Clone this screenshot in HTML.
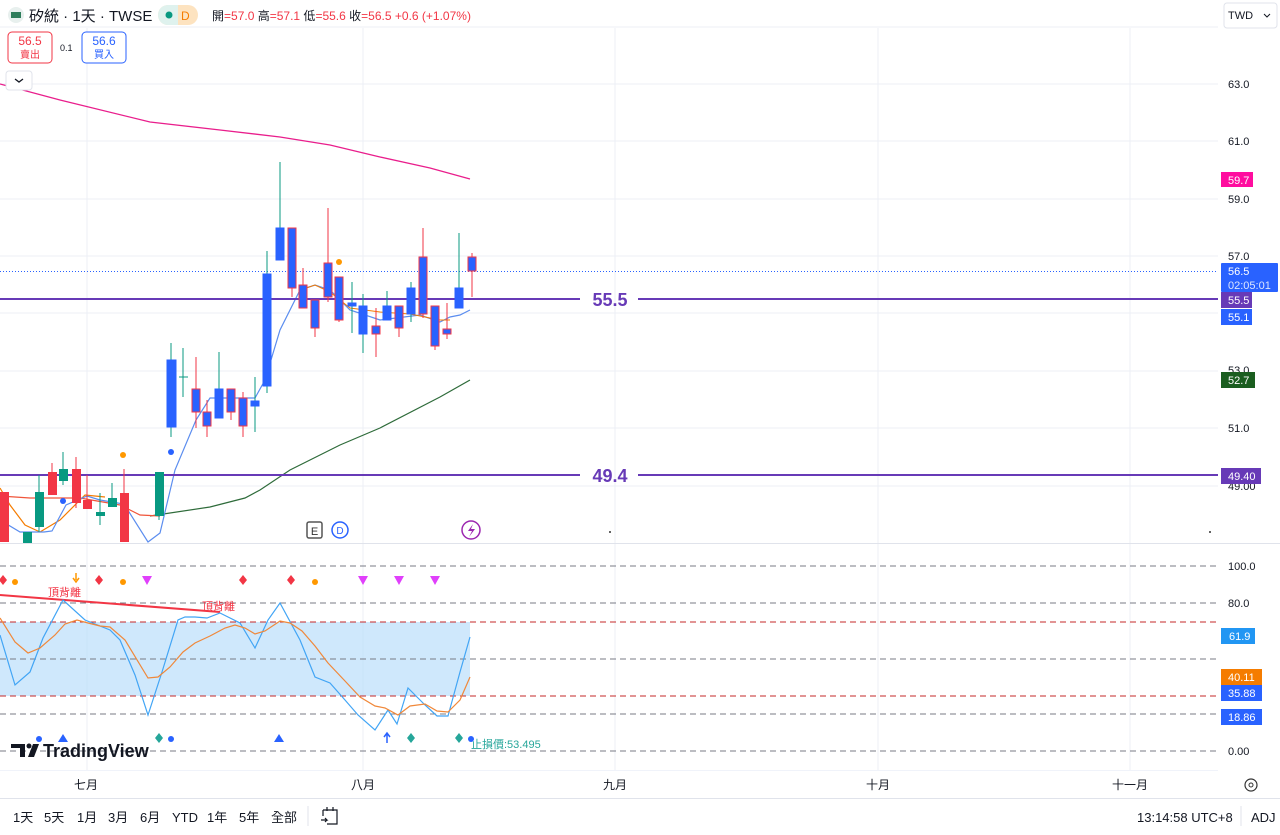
<!DOCTYPE html>
<html><head><meta charset="utf-8"><style>
body{margin:0;width:1280px;height:830px;overflow:hidden;background:#fff;font-family:"Liberation Sans","Noto Sans CJK TC",sans-serif;}
svg text{font-family:"Liberation Sans","Noto Sans CJK TC",sans-serif;}
</style></head><body>
<svg width="1280" height="830" viewBox="0 0 1280 830" xmlns="http://www.w3.org/2000/svg">
<g stroke="#eceff5" stroke-width="1">
<line x1="87" y1="28" x2="87" y2="770"/><line x1="363" y1="28" x2="363" y2="770"/><line x1="615" y1="28" x2="615" y2="770"/><line x1="878" y1="28" x2="878" y2="770"/><line x1="1130" y1="28" x2="1130" y2="770"/>
<line x1="0" y1="27" x2="1218" y2="27"/>
<line x1="0" y1="84" x2="1218" y2="84"/><line x1="0" y1="141" x2="1218" y2="141"/><line x1="0" y1="199" x2="1218" y2="199"/><line x1="0" y1="256" x2="1218" y2="256"/><line x1="0" y1="313" x2="1218" y2="313"/><line x1="0" y1="371" x2="1218" y2="371"/><line x1="0" y1="428" x2="1218" y2="428"/><line x1="0" y1="486" x2="1218" y2="486"/>
</g>
<line x1="0" y1="543.5" x2="1280" y2="543.5" stroke="#e0e3eb"/>
<line x1="0" y1="770.5" x2="1218" y2="770.5" stroke="#f0f3fa"/>
<line x1="0" y1="798.5" x2="1280" y2="798.5" stroke="#e0e3eb"/>
<line x1="0" y1="271.5" x2="1218" y2="271.5" stroke="#2962ff" stroke-dasharray="1 2" stroke-width="1"/>
<polyline fill="none" stroke="#e91e8c" stroke-width="1.3" points="0,84 60,100 150,122 220,130 280,137 330,145 380,157 430,168 470,179"/>
<polyline fill="none" stroke="#2e6b3a" stroke-width="1.2" points="150,516 210,507 245,498 260,490 290,470 340,445 380,428 440,397 470,380"/>
<polyline fill="none" stroke="#f0553a" stroke-width="1.2" points="0,496 30,498 80,498 120,505 140,515 160,516"/>
<polyline fill="none" stroke="#f57c00" stroke-width="1.2" points="0,488 10,505 25,525 40,532 60,520 85,495 105,497"/>
<polyline fill="none" stroke="#5b8def" stroke-width="1.2" points="0,520 20,532 44,532 52,531 66,505 87,496 100,500 124,504 148,542 160,533 175,470 196,420 210,398 230,398 255,398 265,380 280,330 300,290 315,285 330,290 350,310 380,320 420,315 440,322 450,317 460,315 470,310"/>
<polyline fill="none" stroke="#f57c00" stroke-width="1" points="300,290 315,285 330,292 350,308 380,312 410,314 440,320 450,320"/>
<line x1="0" y1="299" x2="580" y2="299" stroke="#673ab7" stroke-width="2"/>
<line x1="638" y1="299" x2="1218" y2="299" stroke="#673ab7" stroke-width="2"/>
<text x="610" y="306" font-size="18" font-weight="600" fill="#673ab7" text-anchor="middle">55.5</text>
<line x1="0" y1="475" x2="580" y2="475" stroke="#673ab7" stroke-width="2"/>
<line x1="638" y1="475" x2="1218" y2="475" stroke="#673ab7" stroke-width="2"/>
<text x="610" y="482" font-size="18" font-weight="600" fill="#673ab7" text-anchor="middle">49.4</text>
<g stroke-width="1">
<rect x="0" y="492" width="9" height="50" fill="#f23645"/>
<rect x="23" y="532" width="9" height="11" fill="#089981"/>
<line x1="39" y1="475" x2="39" y2="532" stroke="#089981"/><rect x="35" y="492" width="9" height="35" fill="#089981"/>
<line x1="52" y1="463" x2="52" y2="495" stroke="#f23645"/><rect x="48" y="472" width="9" height="23" fill="#f23645"/>
<line x1="63" y1="452" x2="63" y2="485" stroke="#089981"/><rect x="59" y="469" width="9" height="12" fill="#089981"/>
<line x1="76" y1="457" x2="76" y2="508" stroke="#f23645"/><rect x="72" y="469" width="9" height="34" fill="#f23645"/>
<line x1="87" y1="475" x2="87" y2="509" stroke="#f23645"/><rect x="83" y="500" width="9" height="9" fill="#f23645"/>
<line x1="100" y1="493" x2="100" y2="525" stroke="#089981"/><rect x="96" y="512" width="9" height="4" fill="#089981"/>
<line x1="112" y1="483" x2="112" y2="507" stroke="#089981"/><rect x="108" y="498" width="9" height="9" fill="#089981"/>
<line x1="124" y1="469" x2="124" y2="542" stroke="#f23645"/><rect x="120" y="493" width="9" height="49" fill="#f23645"/>
<line x1="159" y1="472" x2="159" y2="520" stroke="#089981"/><rect x="155" y="472" width="9" height="44" fill="#089981"/>
</g>
<g stroke="#f23645" stroke-width="1">
<line x1="171" y1="343" x2="171" y2="437" stroke="#089981"/><rect x="167" y="360" width="9" height="67" fill="#2962ff" stroke="#2962ff"/>
<line x1="183" y1="348" x2="183" y2="397" stroke="#089981"/><line x1="179" y1="377" x2="188" y2="377" stroke="#089981"/>
<line x1="196" y1="357" x2="196" y2="428"/><rect x="192" y="389" width="8" height="23" fill="#2962ff"/>
<line x1="207" y1="400" x2="207" y2="437"/><rect x="203" y="412" width="8" height="14" fill="#2962ff"/>
<line x1="219" y1="352" x2="219" y2="418" stroke="#089981"/><rect x="215" y="389" width="8" height="29" fill="#2962ff" stroke="#2962ff"/>
<line x1="231" y1="389" x2="231" y2="420"/><rect x="227" y="389" width="8" height="23" fill="#2962ff"/>
<line x1="243" y1="392" x2="243" y2="437"/><rect x="239" y="398" width="8" height="28" fill="#2962ff"/>
<line x1="255" y1="377" x2="255" y2="432" stroke="#089981"/><rect x="251" y="401" width="8" height="5" fill="#2962ff" stroke="#2962ff"/>
<line x1="267" y1="251" x2="267" y2="393" stroke="#089981"/><rect x="263" y="274" width="8" height="112" fill="#2962ff" stroke="#2962ff"/>
<line x1="280" y1="162" x2="280" y2="260" stroke="#089981"/><rect x="276" y="228" width="8" height="32" fill="#2962ff" stroke="#2962ff"/>
<line x1="292" y1="228" x2="292" y2="297"/><rect x="288" y="228" width="8" height="60" fill="#2962ff"/>
<line x1="303" y1="268" x2="303" y2="308"/><rect x="299" y="285" width="8" height="23" fill="#2962ff"/>
<line x1="315" y1="300" x2="315" y2="337"/><rect x="311" y="300" width="8" height="28" fill="#2962ff"/>
<line x1="328" y1="208" x2="328" y2="302"/><rect x="324" y="263" width="8" height="34" fill="#2962ff"/>
<line x1="339" y1="277" x2="339" y2="322"/><rect x="335" y="277" width="8" height="43" fill="#2962ff"/>
<line x1="352" y1="282" x2="352" y2="333" stroke="#089981"/><rect x="348" y="303" width="8" height="3" fill="#2962ff" stroke="#2962ff"/>
<line x1="363" y1="294" x2="363" y2="353" stroke="#089981"/><rect x="359" y="306" width="8" height="28" fill="#2962ff" stroke="#2962ff"/>
<line x1="376" y1="308" x2="376" y2="357"/><rect x="372" y="326" width="8" height="8" fill="#2962ff"/>
<line x1="387" y1="291" x2="387" y2="320" stroke="#089981"/><rect x="383" y="306" width="8" height="14" fill="#2962ff" stroke="#2962ff"/>
<line x1="399" y1="306" x2="399" y2="337"/><rect x="395" y="306" width="8" height="22" fill="#2962ff"/>
<line x1="411" y1="282" x2="411" y2="322" stroke="#089981"/><rect x="407" y="288" width="8" height="26" fill="#2962ff" stroke="#2962ff"/>
<line x1="423" y1="228" x2="423" y2="318"/><rect x="419" y="257" width="8" height="57" fill="#2962ff"/>
<line x1="435" y1="306" x2="435" y2="350"/><rect x="431" y="306" width="8" height="40" fill="#2962ff"/>
<line x1="447" y1="303" x2="447" y2="339"/><rect x="443" y="329" width="8" height="5" fill="#2962ff"/>
<line x1="459" y1="233" x2="459" y2="308" stroke="#089981"/><rect x="455" y="288" width="8" height="20" fill="#2962ff" stroke="#2962ff"/>
<line x1="472" y1="253" x2="472" y2="297"/><rect x="468" y="257" width="8" height="14" fill="#2962ff"/>
</g>
<circle cx="123" cy="455" r="3" fill="#ff9800"/><circle cx="171" cy="452" r="3" fill="#2962ff"/><circle cx="63" cy="501" r="3" fill="#2962ff"/><circle cx="339" cy="262" r="3" fill="#ff9800"/>
<rect x="307" y="522" width="15" height="16" rx="2" fill="#fff" stroke="#555" stroke-width="1.5"/><text x="314.5" y="535" font-size="11" text-anchor="middle" fill="#333">E</text>
<circle cx="340" cy="530" r="8" fill="#fff" stroke="#2962ff" stroke-width="1.5"/><text x="340" y="534" font-size="10" text-anchor="middle" fill="#2962ff">D</text>
<circle cx="471" cy="530" r="9" fill="#fff" stroke="#9c27b0" stroke-width="1.5"/><path d="M473 524 L468 531 L472 531 L469 537 L475 529 L471 529 Z" fill="#9c27b0"/>
<circle cx="610" cy="532" r="1" fill="#333"/><circle cx="1210" cy="532" r="1" fill="#333"/>
<rect x="0" y="622" width="470" height="74" fill="#bbdefb" opacity="0.7"/>
<g stroke-dasharray="6 4" stroke-width="1">
<line x1="0" y1="566" x2="1218" y2="566" stroke="#787b86"/>
<line x1="0" y1="603" x2="1218" y2="603" stroke="#787b86"/>
<line x1="0" y1="622" x2="1218" y2="622" stroke="#c62828"/>
<line x1="0" y1="659" x2="1218" y2="659" stroke="#787b86"/>
<line x1="0" y1="696" x2="1218" y2="696" stroke="#c62828"/>
<line x1="0" y1="714" x2="1218" y2="714" stroke="#787b86"/>
<line x1="0" y1="751" x2="1218" y2="751" stroke="#787b86"/>
</g>
<line x1="0" y1="595" x2="220" y2="612" stroke="#f23645" stroke-width="2"/>
<text x="48" y="596" font-size="11" fill="#f23645">頂背離</text><text x="202" y="610" font-size="11" fill="#f23645">頂背離</text>
<polyline fill="none" stroke="#42a5f5" stroke-width="1.2" points="0,635 15,685 30,672 43,638 63,600 85,620 110,630 120,640 135,675 148,715 162,672 178,620 185,617 195,617 207,618 220,613 240,623 255,648 268,620 280,603 300,640 315,677 330,683 345,700 358,715 375,730 388,710 397,724 408,688 425,705 437,716 448,716 460,672 470,637"/>
<polyline fill="none" stroke="#f0883a" stroke-width="1.2" points="0,618 15,642 28,653 40,648 55,635 65,624 77,620 88,623 100,626 110,627 125,640 148,678 158,677 170,667 183,652 195,643 210,636 225,628 235,625 245,628 255,634 265,631 280,621 290,623 302,631 315,646 328,663 345,681 360,697 375,706 385,708 398,715 410,706 425,704 437,711 448,712 460,700 470,677"/>
<g>
<path d="M3 575 L7 580 L3 585 L-1 580Z" fill="#f23645"/><circle cx="15" cy="582" r="3" fill="#ff9800"/>
<path d="M76 573 L76 580 M73 578 L76 582 L79 578" stroke="#ff9800" stroke-width="1.5" fill="none"/>
<path d="M99 575 L103 580 L99 585 L95 580Z" fill="#f23645"/><circle cx="123" cy="582" r="3" fill="#ff9800"/>
<path d="M142 576 L152 576 L147 585Z" fill="#e040fb"/>
<path d="M243 575 L247 580 L243 585 L239 580Z" fill="#f23645"/><path d="M291 575 L295 580 L291 585 L287 580Z" fill="#f23645"/><circle cx="315" cy="582" r="3" fill="#ff9800"/>
<path d="M358 576 L368 576 L363 585Z" fill="#e040fb"/><path d="M394 576 L404 576 L399 585Z" fill="#e040fb"/><path d="M430 576 L440 576 L435 585Z" fill="#e040fb"/>
<circle cx="39" cy="739" r="3" fill="#2962ff"/><path d="M63 734 L68 742 L58 742Z" fill="#2962ff"/>
<path d="M159 733 L163 738 L159 743 L155 738Z" fill="#26a69a"/><circle cx="171" cy="739" r="3" fill="#2962ff"/>
<path d="M279 734 L284 742 L274 742Z" fill="#2962ff"/>
<path d="M387 743 L387 734 M384 737 L387 733 L390 737" stroke="#2962ff" stroke-width="1.5" fill="none"/>
<path d="M411 733 L415 738 L411 743 L407 738Z" fill="#26a69a"/><path d="M459 733 L463 738 L459 743 L455 738Z" fill="#26a69a"/><circle cx="471" cy="739" r="3" fill="#2962ff"/>
<text x="471" y="748" font-size="11" fill="#26a69a">止損價:53.495</text>
</g>
<g fill="#131722">
<path d="M11 744 L25 744 L25 757 L20 757 L20 748 L11 748Z"/><circle cx="29" cy="746" r="2.5"/><path d="M33 744 L39 744 L34 757 L28 757Z"/>
</g>
<text x="43" y="757" font-size="18" font-weight="600" fill="#131722">TradingView</text>
<g font-size="11" fill="#131722">
<text x="1228" y="88">63.0</text><text x="1228" y="145">61.0</text><text x="1228" y="203">59.0</text><text x="1228" y="260">57.0</text><text x="1228" y="374">53.0</text><text x="1228" y="432">51.0</text><text x="1228" y="490">49.00</text>
<text x="1228" y="570">100.0</text><text x="1228" y="607">80.0</text><text x="1228" y="755">0.00</text>
</g>
<g font-size="11" fill="#fff">
<rect x="1221" y="172" width="32" height="15" fill="#ff0d9f"/><text x="1228" y="184">59.7</text>
<rect x="1221" y="263" width="57" height="29" rx="1" fill="#2962ff"/><text x="1228" y="275">56.5</text><text x="1228" y="289" fill="#dce6ff">02:05:01</text>
<rect x="1221" y="292" width="31" height="16" fill="#673ab7"/><text x="1228" y="304">55.5</text>
<rect x="1221" y="309" width="31" height="16" fill="#2962ff"/><text x="1228" y="321">55.1</text>
<rect x="1221" y="372" width="34" height="16" fill="#1b5e20"/><text x="1228" y="384">52.7</text>
<rect x="1221" y="468" width="40" height="16" fill="#673ab7"/><text x="1228" y="480">49.40</text>
<rect x="1221" y="628" width="34" height="16" fill="#2196f3"/><text x="1229" y="640">61.9</text>
<rect x="1221" y="669" width="41" height="16" fill="#f57c00"/><text x="1228" y="681">40.11</text>
<rect x="1221" y="685" width="41" height="16" fill="#2962ff"/><text x="1228" y="697">35.88</text>
<rect x="1221" y="709" width="41" height="16" fill="#2962ff"/><text x="1228" y="721">18.86</text>
</g>
<rect x="1224" y="3" width="53" height="25" rx="3" fill="#fff" stroke="#e0e3eb"/><text x="1228" y="19" font-size="11" fill="#131722">TWD</text><path d="M1264 14 l3 3 l3 -3" stroke="#131722" fill="none"/>
<circle cx="1251" cy="785" r="6" fill="none" stroke="#333" stroke-width="1.2"/><circle cx="1251" cy="785" r="2" fill="none" stroke="#333"/>
<g font-size="12" fill="#131722" text-anchor="middle"><text x="86" y="789">七月</text><text x="363" y="789">八月</text><text x="615" y="789">九月</text><text x="878" y="789">十月</text><text x="1130" y="789">十一月</text></g>
<g font-size="13" fill="#131722"><text x="13" y="822">1天</text><text x="44" y="822">5天</text><text x="77" y="822">1月</text><text x="108" y="822">3月</text><text x="140" y="822">6月</text><text x="172" y="822">YTD</text><text x="207" y="822">1年</text><text x="239" y="822">5年</text><text x="271" y="822">全部</text>
<text x="1137" y="822">13:14:58 UTC+8</text><text x="1251" y="822">ADJ</text></g>
<line x1="308" y1="806" x2="308" y2="826" stroke="#e0e3eb"/><line x1="1241" y1="806" x2="1241" y2="826" stroke="#e0e3eb"/>
<path d="M323 810 h14 v14 h-10 M323 810 v6 M327 807 v4 M333 807 v4 M321 820 h6 l-2 -2 M327 820 l-2 2" stroke="#131722" fill="none" stroke-width="1.2"/>
<circle cx="16" cy="15" r="8" fill="#e8f0ee"/><rect x="11" y="12" width="10" height="6" fill="#2e7d5b"/>
<text x="29" y="21" font-size="15" fill="#131722">矽統 · 1天 · TWSE</text>
<rect x="158" y="5" width="40" height="20" rx="10" fill="#fde3c0"/><path d="M168 5 h10 v20 h-10 a10 10 0 0 1 0 -20Z" fill="#dff2ee"/><circle cx="169" cy="15" r="3.5" fill="#089981"/><text x="181" y="20" font-size="12" fill="#f57c00">D</text>
<g font-size="12"><text x="212" y="20" fill="#131722">開<tspan fill="#f23645">=57.0</tspan> 高<tspan fill="#f23645">=57.1</tspan> 低<tspan fill="#f23645">=55.6</tspan> 收<tspan fill="#f23645">=56.5</tspan> <tspan fill="#f23645">+0.6 (+1.07%)</tspan></text></g>
<rect x="8" y="32" width="44" height="31" rx="4" fill="#fff" stroke="#f23645"/><text x="30" y="45" font-size="12" fill="#f23645" text-anchor="middle">56.5</text><text x="30" y="58" font-size="10" fill="#f23645" text-anchor="middle">賣出</text>
<text x="60" y="51" font-size="9" fill="#131722">0.1</text>
<rect x="82" y="32" width="44" height="31" rx="4" fill="#fff" stroke="#2962ff"/><text x="104" y="45" font-size="12" fill="#2962ff" text-anchor="middle">56.6</text><text x="104" y="58" font-size="10" fill="#2962ff" text-anchor="middle">買入</text>
<rect x="6" y="71" width="26" height="19" rx="3" fill="#fff" stroke="#e0e3eb"/><path d="M15 79 l4 3 l4 -3" stroke="#131722" fill="none" stroke-width="1.3"/>
</svg>
</body></html>
